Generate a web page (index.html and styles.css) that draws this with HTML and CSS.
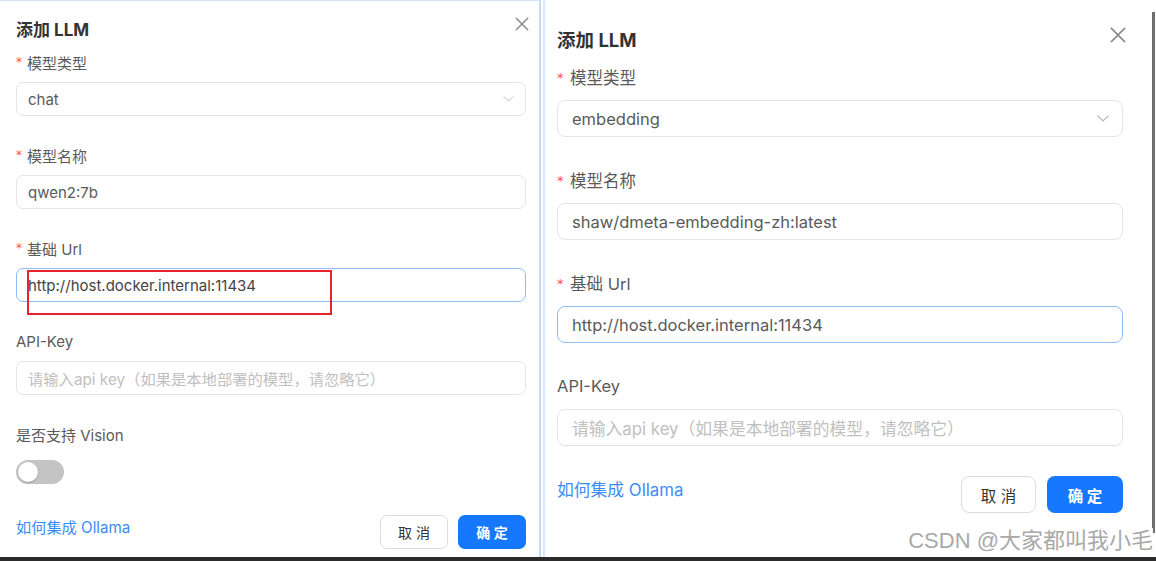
FILE: index.html
```html
<!DOCTYPE html>
<html lang="zh-CN">
<head>
<meta charset="utf-8">
<title>添加 LLM</title>
<link rel="stylesheet" href="styles.css">
</head>
<body>
<div class="screen">
  <section class="shot shot-left">
    <div class="dialog dialog-sm">
      <header class="dlg-head">
        <h2 class="dlg-title">添加 LLM</h2>
        <span class="dlg-close"><svg viewBox="0 0 24 24"><path d="M6 6L18 18M18 6L6 18"/></svg></span>
      </header>
      <div class="item">
        <div class="lbl"><span class="req">*</span>模型类型</div>
        <div class="ctl select"><span class="val">chat</span><svg class="chev" viewBox="0 0 12 7"><path d="M0.5 0.5L6 6L11.5 0.5"/></svg></div>
      </div>
      <div class="item">
        <div class="lbl"><span class="req">*</span>模型名称</div>
        <div class="ctl"><span class="val">qwen2:7b</span></div>
      </div>
      <div class="item">
        <div class="lbl"><span class="req">*</span>基础 Url</div>
        <div class="ctl focus annotated"><span class="val val-dark">http://host.docker.internal:11434</span><span class="redbox"></span></div>
      </div>
      <div class="item">
        <div class="lbl">API-Key</div>
        <div class="ctl"><span class="ph">请输入api key（如果是本地部署的模型，请忽略它）</span></div>
      </div>
      <div class="item item-switch">
        <div class="lbl">是否支持 Vision</div>
        <div class="switch"><span class="knob"></span></div>
      </div>
      <footer class="dlg-foot">
        <span class="link">如何集成 Ollama</span>
        <div class="btns">
          <span class="btn btn-default">取 消</span>
          <span class="btn btn-primary">确 定</span>
        </div>
      </footer>
    </div>
  </section>
  <section class="shot shot-right">
    <div class="dialog dialog-lg">
      <header class="dlg-head">
        <h2 class="dlg-title">添加 LLM</h2>
        <span class="dlg-close"><svg viewBox="0 0 24 24"><path d="M6 6L18 18M18 6L6 18"/></svg></span>
      </header>
      <div class="item">
        <div class="lbl"><span class="req">*</span>模型类型</div>
        <div class="ctl select"><span class="val">embedding</span><svg class="chev" viewBox="0 0 12 7"><path d="M0.5 0.5L6 6L11.5 0.5"/></svg></div>
      </div>
      <div class="item">
        <div class="lbl"><span class="req">*</span>模型名称</div>
        <div class="ctl"><span class="val">shaw/dmeta-embedding-zh:latest</span></div>
      </div>
      <div class="item">
        <div class="lbl"><span class="req">*</span>基础 Url</div>
        <div class="ctl focus"><span class="val">http://host.docker.internal:11434</span></div>
      </div>
      <div class="item">
        <div class="lbl">API-Key</div>
        <div class="ctl"><span class="ph">请输入api key（如果是本地部署的模型，请忽略它）</span></div>
      </div>
      <footer class="dlg-foot">
        <span class="link">如何集成 Ollama</span>
        <div class="btns">
          <span class="btn btn-default">取 消</span>
          <span class="btn btn-primary">确 定</span>
        </div>
      </footer>
    </div>
    <div class="edge"></div>
    <div class="watermark">CSDN @大家都叫我小毛</div>
  </section>
</div>
<div class="taskbar"></div>
</body>
</html>
```

FILE: styles.css
```css
* { box-sizing: border-box; margin: 0; padding: 0; }

html, body {
  width: 1156px;
  height: 561px;
  overflow: hidden;
  background: #ffffff;
}

body {
  font-family: "Inter", "Noto Sans CJK SC", sans-serif;
  color: #555;
}

.screen {
  display: flex;
  height: 557px;
}

.taskbar {
  height: 4px;
  background: #2b2b2b;
}

.shot {
  background: #fff;
  position: relative;
}

.shot-left {
  width: 541px;
  border-top: 1px solid #d3e4fa;
  border-right: 2px solid #c2d9f7;
  padding: 0 13px 0 16px;
}

.shot-right {
  flex: 1;
  display: flex;
  margin-left: 2px;
  border-left: 2px solid #d8e7fb;
  padding-left: 12px;
}

.dialog-lg {
  width: 566px;
  margin-right: 29px;
}

.edge {
  width: 3px;
  height: 521px;
  margin-top: 12px;
  background: #6f6f6f;
}

/* ---------- shared dialog parts ---------- */
.dlg-head {
  display: flex;
  justify-content: space-between;
  align-items: flex-start;
}

.dlg-title {
  font-weight: 700;
  color: #333;
}

.dlg-close {
  display: block;
  width: 24px;
  height: 24px;
}

.dlg-close svg {
  width: 24px;
  height: 24px;
  display: block;
}

.dlg-close path {
  stroke: #8c8c8c;
  stroke-width: 1.6;
  fill: none;
  stroke-linecap: round;
}

.lbl {
  color: #5a5a5a;
  white-space: nowrap;
  display: flex;
  align-items: center;
}

.req {
  color: #ff4d4f;
  font-family: "DejaVu Sans", sans-serif;
  display: inline-block;
  line-height: 1;
}

.ctl {
  display: flex;
  align-items: center;
  justify-content: space-between;
  border: 1px solid #e4e4e4;
  background: #fff;
  position: relative;
}

.ctl.focus {
  border-color: #8fbcf7;
}

.val { color: #5a5a5a; white-space: nowrap; }
.val-dark { color: #444; }
.ph { color: #c0c0c0; white-space: nowrap; }

.chev path {
  stroke: #b8b8b8;
  stroke-width: 1.1;
  fill: none;
}

.redbox {
  position: absolute;
  left: 10px;
  top: 1px;
  width: 305px;
  height: 45px;
  border: 2px solid #e8232d;
  pointer-events: none;
}

.switch {
  width: 48px;
  height: 24px;
  border-radius: 12px;
  background: #c4c4c4;
  padding: 2px;
  display: flex;
}

.knob {
  width: 20px;
  height: 20px;
  border-radius: 50%;
  background: #fff;
  box-shadow: 0 1px 2px rgba(0,0,0,0.2);
}

.dlg-foot {
  display: flex;
  justify-content: space-between;
  align-items: center;
}

.link {
  color: #3b8cf6;
  white-space: nowrap;
}

.btns {
  display: flex;
}

.btn {
  display: flex;
  align-items: center;
  justify-content: center;
  white-space: nowrap;
}

.btn-default {
  border: 1px solid #dcdcdc;
  background: #fff;
  color: #333;
}

.btn-primary {
  background: #1677ff;
  color: #fff;
  font-weight: 700;
}

/* ---------- small (left) dialog ---------- */
.dialog-sm .dlg-head { padding-top: 17px; margin-right: -8px; height: 41px; }
.dialog-sm .dlg-title { font-size: 17px; line-height: 24px; height: 24px; }
.dialog-sm .dlg-close { margin-top: -6px; }
.dialog-sm .dlg-close svg { transform: scale(0.95); }
.dialog-sm .dlg-head + .item { margin-top: 9px; }
.dialog-sm .item { margin-bottom: 28px; }
.dialog-sm .lbl { font-size: 15px; height: 22px; margin-bottom: 9px; }
.dialog-sm .req { font-size: 12px; width: 11px; }
.dialog-sm .ctl { height: 34px; border-radius: 7px; padding: 0 11px; font-size: 15px; }
.dialog-sm .ph { font-size: 15.3px; }
.dialog-sm .chev { width: 11px; height: 6px; }
.dialog-sm .item-switch { margin-bottom: 0; }
.dialog-sm .item-switch .lbl { margin-bottom: 15px; }
.dialog-sm .dlg-foot { margin-top: 31px; height: 34px; }
.dialog-sm .link { font-size: 15.2px; line-height: 20px; margin-bottom: 8px; }
.dialog-sm .btns { gap: 10px; }
.dialog-sm .btn { width: 68px; height: 34px; border-radius: 7px; font-size: 14px; }

/* ---------- large (right) dialog ---------- */
.dialog-lg .dlg-head { padding-top: 27px; margin-right: -7px; height: 53px; }
.dialog-lg .dlg-title { font-size: 18.5px; line-height: 26px; height: 26px; }
.dialog-lg .dlg-close { margin-top: -4px; }
.dialog-lg .dlg-close svg { transform: scale(1.1); }
.dialog-lg .dlg-head + .item { margin-top: 12px; }
.dialog-lg .item { margin-bottom: 31px; }
.dialog-lg .lbl { font-size: 16.5px; height: 24px; margin-bottom: 11px; }
.dialog-lg .req { font-size: 13px; width: 13px; }
.dialog-lg .ctl { height: 37px; border-radius: 8px; padding: 0 14px; font-size: 16.5px; }
.dialog-lg .ph { font-size: 16.8px; }
.dialog-lg .chev { width: 12px; height: 7px; margin-right: -1px; }
.dialog-lg .item:last-of-type { margin-bottom: 0; }
.dialog-lg .dlg-foot { margin-top: 30px; height: 37px; }
.dialog-lg .link { font-size: 16.8px; line-height: 22px; margin-bottom: 10px; }
.dialog-lg .btns { gap: 11px; }
.dialog-lg .btn { width: 75px; height: 37px; border-radius: 8px; font-size: 15.5px; }
.dialog-lg .btn-primary { width: 76px; }

.watermark {
  position: absolute;
  right: 3px;
  bottom: 3px;
  font-family: "Liberation Sans", "Noto Sans CJK SC", sans-serif;
  font-size: 22px;
  line-height: 26px;
  color: #a9a9a9;
  background: rgba(255,255,255,0.9);
  padding-left: 4px;
  white-space: nowrap;
}
```
